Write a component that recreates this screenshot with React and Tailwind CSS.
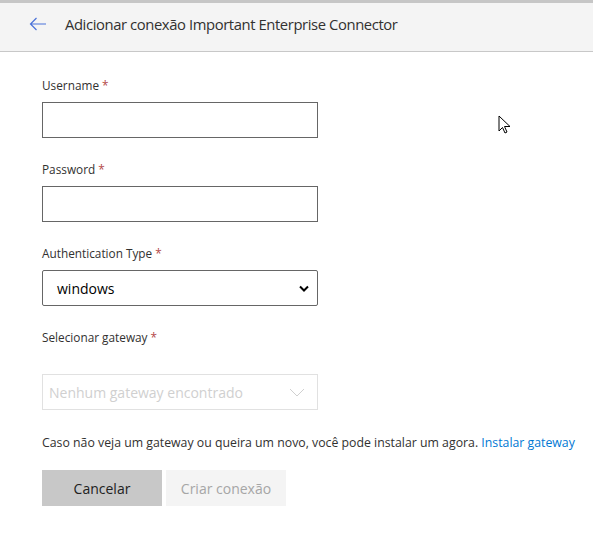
import React from "react";

const font = { fontFamily: '"Open Sans", "Noto Sans", sans-serif' };

const Label = ({ children }) => (
  <div className="text-[11.8px] leading-[16px] text-[#323130]">
    {children} <span className="text-[#b34848]">*</span>
  </div>
);

export default function App() {
  return (
    <div className="relative w-[593px] h-[542px] bg-white overflow-hidden" style={font}>
      {/* top header */}
      <div className="h-[3px] bg-[#c6c6c6]" />
      <div className="h-[49px] bg-[#f4f4f4] border-b border-[#c8c8c8] flex items-center pl-[29px] pb-[6px]">
        <svg width="18" height="14" viewBox="0 0 18 14" fill="none" className="mr-[18px]">
          <path d="M17 7H1.5M7.5 1L1.5 7l6 6" stroke="#4a72d9" strokeWidth="1.2" />
        </svg>
        <span className="text-[14.8px] text-[#323130] tracking-[-0.4px]">
          Adicionar conexão Important Enterprise Connector
        </span>
      </div>

      <div className="pl-[42px] pt-[25px]">
        <Label>Username</Label>
        <input className="mt-[9px] w-[276px] h-[36px] border border-[#666] outline-none" />

        <div className="mt-[23px]">
          <Label>Password</Label>
          <input type="password" className="mt-[9px] w-[276px] h-[36px] border border-[#666] outline-none" />
        </div>

        <div className="mt-[23px]">
          <Label>Authentication Type</Label>
          <div className="mt-[9px] w-[276px] h-[36px] border border-[#666] rounded-[2px] flex items-center justify-between pl-[14px] pr-[8px]">
            <span className="text-[14px] text-black">windows</span>
            <svg width="10" height="7" viewBox="0 0 10 7">
              <path d="M1 1.5l4 4 4-4" stroke="#000" strokeWidth="2" fill="none" />
            </svg>
          </div>
        </div>

        <div className="mt-[23px]">
          <Label>Selecionar gateway</Label>
          <div className="mt-[29px] w-[276px] h-[36px] border border-[#e1e1e1] flex items-center justify-between pl-[6px] pr-[12px]">
            <span className="text-[14px] text-[#d0d0d0]">Nenhum gateway encontrado</span>
            <svg width="16" height="9" viewBox="0 0 16 9">
              <path d="M1 1l7 7 7-7" stroke="#d0d0d0" strokeWidth="1" fill="none" />
            </svg>
          </div>
        </div>

        <div className="mt-[24px] text-[12.3px] text-[#323130] whitespace-nowrap">
          Caso não veja um gateway ou queira um novo, você pode instalar um agora.{" "}
          <a className="text-[#0078d4]">Instalar gateway</a>
        </div>

        <div className="mt-[18px] flex gap-[4px]">
          <button className="w-[120px] h-[36px] bg-[#c8c8c8] text-[14px] text-[#212121]">Cancelar</button>
          <button className="w-[120px] h-[36px] bg-[#f4f4f4] text-[14px] text-[#a6a6a6]">Criar conexão</button>
        </div>
      </div>

      {/* mouse cursor */}
      <svg className="absolute left-[498px] top-[115px]" width="14" height="20" viewBox="0 0 14 20">
        <path d="M1 1v15l3.5-3.5 2.5 5.5 2-1-2.5-5.5H12z" fill="#fff" stroke="#000" strokeWidth="1" />
      </svg>
    </div>
  );
}
